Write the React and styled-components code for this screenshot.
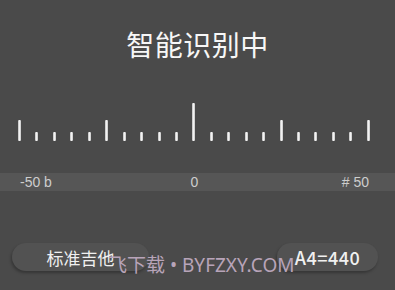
import styled, { createGlobalStyle } from "styled-components";

const Global = createGlobalStyle`
  html, body {
    margin: 0;
    padding: 0;
    background: #4a4a4a;
  }
  body {
    font-family: "Noto Sans", "Noto Sans CJK SC", sans-serif;
  }
`;

const Screen = styled.div`
  position: relative;
  width: 395px;
  height: 290px;
  overflow: hidden;
  background: #4a4a4a;
  display: flex;
  flex-direction: column;
`;

const Title = styled.h1`
  margin: 24px 0 0;
  text-align: center;
  font-family: "Noto Sans CJK SC", sans-serif;
  font-weight: 400;
  font-size: 28px;
  line-height: 40px;
  color: #f7f7f7;
  letter-spacing: 0.5px;
`;

const Scale = styled.div`
  display: flex;
  justify-content: space-between;
  align-items: flex-end;
  height: 40px;
  margin-top: 37px;
  padding: 0 25px 0 18px;
`;

const Tick = styled.span`
  display: block;
  width: 3px;
  height: ${(p) => p.$h}px;
  border-radius: 1px;
  background: linear-gradient(90deg, #bdbdbd, #f2f2f2 50%, #c4c4c4);
`;

const Band = styled.div`
  display: grid;
  grid-template-columns: 1fr auto 1fr;
  align-items: center;
  height: 18px;
  margin-top: 32px;
  padding: 0 26px 0 20px;
  background: #565656;
  font-family: "Liberation Sans", sans-serif;
  font-size: 14px;
  color: #cdcdcd;
`;

const Label = styled.span`
  text-align: ${(p) => p.$align || "left"};
`;

const Controls = styled.div`
  display: flex;
  justify-content: space-between;
  margin-top: 52px;
  padding: 0 17px 0 12px;
`;

const Pill = styled.div`
  width: ${(p) => p.$w}px;
  height: 28px;
  border-radius: 14px;
  background: #525252;
  box-shadow: -1px 2px 3px rgba(0, 0, 0, 0.28);
  display: flex;
  align-items: center;
  justify-content: center;
  color: #f0f0f0;
  font-family: "Noto Sans CJK SC", sans-serif;
  font-size: ${(p) => (p.$bold ? 18 : 17)}px;
  font-weight: ${(p) => (p.$bold ? 500 : 400)};
  letter-spacing: ${(p) => (p.$bold ? "0.5px" : "0")};
`;

const Watermark = styled.div`
  position: absolute;
  left: 108px;
  top: 256px;
  font-family: "Noto Sans", "Noto Sans CJK SC", sans-serif;
  font-weight: 400;
  font-size: 19px;
  line-height: 19px;
  color: #b8a4b9;
  white-space: nowrap;
  pointer-events: none;
`;

const ticks = Array.from({ length: 21 }, (_, i) => {
  if (i === 10) return 38;
  if (i % 5 === 0) return 21;
  return 9;
});

export default function App() {
  return (
    <>
      <Global />
      <Screen>
        <Title>智能识别中</Title>
        <Scale>
          {ticks.map((h, i) => (
            <Tick key={i} $h={h} />
          ))}
        </Scale>
        <Band>
          <Label>-50 b</Label>
          <Label $align="center">0</Label>
          <Label $align="right"># 50</Label>
        </Band>
        <Controls>
          <Pill $w={137}>标准吉他</Pill>
          <Pill $w={101} $bold>
            A4=440
          </Pill>
        </Controls>
        <Watermark>飞下载 • BYFZXY.COM</Watermark>
      </Screen>
    </>
  );
}
